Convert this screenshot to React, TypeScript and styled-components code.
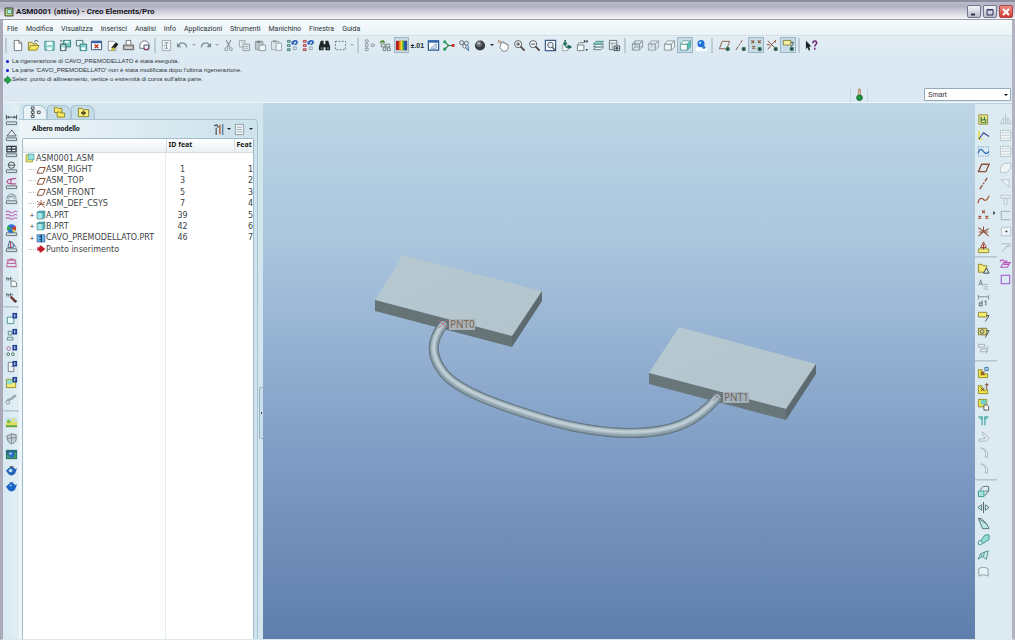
import React from "react";
import styled, { createGlobalStyle, css } from "styled-components";

const GlobalStyle = createGlobalStyle`
  * { box-sizing: border-box; }
  body { margin: 0; font-family: "Liberation Sans", Arial, sans-serif; font-size: 7px; color: #2c3438; }
  button { font: inherit; color: inherit; background: none; border: 0; padding: 0; margin: 0; }
`;

/* ---------- icon drawings on a 14 x 14 grid ---------- */

const L = ({ d, c = "#5a6a70", w = 1, f = "none" }: { d: string; c?: string; w?: number; f?: string }) => (
  <path d={d} stroke={c} strokeWidth={w} fill={f} />
);
const B = ({ d, f }: { d: string; f: string }) => <path d={d} fill={f} />;

const ruler = <><L d="M1.5 9.5h11v3h-11z" c="#5c6d76" f="#eef4f6" /><L d="M3.5 9.5v2M5.5 9.5v2M7.5 9.5v2M9.5 9.5v2M11 9.5v2" c="#9aa9b0" w={0.7} /></>;
const eye = <><circle cx="10.500" cy="10.800" r="2.400" fill="#4a7d6c" /><circle cx="10.500" cy="10.800" r="1" fill="#173c36" /></>;
const flag = <><B d="M8 1h5v6H8z" f="#1d3f94" /><L d="M10.5 2.5v3" c="#fff" /></>;
const cube = (c: string, front: string, side = front) => (
  <><L d="M1.500 5.500h7.500v6.500H1.500z" c={c} f={front} /><L d="M1.500 5.500l3-3.500h8L9 5.500z" c={c} f={front} /><L d="M9 5.500l3.500-3.500v6.500L9 12z" c={c} f={side} /></>
);
const lens = <><circle cx="5.500" cy="5.500" r="3.800" fill="#f5fafb" stroke="#4f5b60" /><L d="M8 8l4.500 4.500" c="#54433c" w={1.8} /></>;

const icons: Record<string, React.ReactNode> = {
  fresh: <><L d="M3.5 1.500h5l3 3v8h-8z" f="#fff" c="#6c7378" /><L d="M8.500 1.500v3h3" c="#6c7378" /></>,
  open: <><L d="M1.500 12V3.500h4l1 1.500h4v2" c="#8d8428" f="#efe28a" /><L d="M1.500 12l2.500-5h9l-2.500 5z" c="#8d8428" f="#f6e85e" /><L d="M8 3c1-2 3-2 4 0" c="#39434a" /></>,
  save: <><L d="M2 2.500h10v9.500H2z" c="#3d8d8c" f="#8fd8d0" /><B d="M4 3h6v3.500H4zM4.500 9h5v3h-5z" f="#f4fbfb" /></>,
  saveCopy: <><L d="M4.500 1.500h8v7h-8z" c="#2f7d7e" f="#7fcfc8" /><B d="M6.500 2h4v2h-4z" f="#fff" /><L d="M1.500 5.500h6v7h-6z" c="#3a4c54" f="#9ddbd2" /><B d="M3 9h3v3H3z" f="#fff" /><L d="M1 2h2" c="#445" /></>,
  backup: <><L d="M1.500 1.500h7v6h-7z" c="#3f6e73" f="#e8f5f5" /><L d="M5.500 5.500h7v7h-7z" c="#2f7d7e" f="#86d3cb" /><B d="M7 9h4v3H7z" f="#fff" /></>,
  close: <><L d="M1.500 2.500h11v9h-11z" c="#284b7a" f="#fff" /><B d="M2 2h10v2.500H2z" f="#2e5fa6" /><L d="M5 6l4 4M9 6l-4 4" c="#c0392b" w={1.500} /></>,
  erase: <><L d="M2.500 2.500h6l2 2v8h-8z" c="#8b9296" f="#fff" /><L d="M7 10.500l5-6" c="#222" w={3.500} /><L d="M6 12.500l3-3" c="#c8c13c" w={2.500} /></>,
  print: <><L d="M4.500 6V1.500h5V6" c="#696c6e" f="#fff" /><L d="M1.500 6.500h11v5h-11z" c="#5a5c5d" f="#b3aeb0" /><L d="M3 9.500h8" c="#f2eccc" /></>,
  mail: <><path d="M2 7a5 5 0 0 1 10 0v3H2z" fill="#fff" stroke="#5c6a75" /><L d="M6.500 6.500h5v5h-5z" c="#454f59" f="#eef" /><L d="M7 10l2 2 2-2" c="#b03" /></>,
  props: <><L d="M2.500 1.500h9v11h-9z" c="#9aa6ac" f="#eef4f7" /><L d="M5 4h4M7 4v6M5 10h4M4 7h2" c="#8b979d" /></>,
  undo: <><L d="M3 6.500C5 3 11 3.500 11.500 9" c="#7d8d95" w={1.400} /><B d="M1 4v5h5z" f="#7d8d95" /></>,
  redo: <><L d="M11 6.500C9 3 3 3.500 2.500 9" c="#7d8d95" w={1.400} /><B d="M13 4v5H8z" f="#7d8d95" /></>,
  cut: <><L d="M4.500 1l4 8M9.500 1l-4 8" c="#8b979d" w={1.300} /><circle cx="4.500" cy="11" r="1.600" fill="none" stroke="#8b979d" /><circle cx="9.500" cy="11" r="1.600" fill="none" stroke="#8b979d" /></>,
  copy: <><L d="M1.500 1.500h6v7h-6z" c="#98a5ac" f="#e9f1f5" /><L d="M5.500 5.500h7v7h-7z" c="#8b979d" f="#dfe9ee" /><L d="M3 3.500h3M7 8h4M7 10h4" c="#a2adb3" /></>,
  paste: <><L d="M1.500 2.500h8v9h-8z" c="#8b979d" f="#bac7cd" /><L d="M5.500 6.500h7v6h-7z" c="#8b979d" f="#eef4f7" /><L d="M3 3h4" c="#6f7c83" w={2} /></>,
  pasteSp: <><L d="M1.500 2.500h8v9h-8z" c="#98a5ac" f="#dce7ec" /><L d="M6.500 4.500h6v8h-6z" c="#98a5ac" f="#eef4f7" /><L d="M3 2.500h4" c="#8b979d" w={2} /></>,
  regen: <><L d="M1.500 1.500h3v2h-3zM1.500 6h3v2h-3zM1.500 10.500h3v2h-3z" c="#3b7c74" f="#b8e3da" /><L d="M7 5c1-4 5-4 5-1l-2 2" c="#2459b8" w={1.700} /><B d="M6 2v4h4z" f="#2459b8" /><L d="M8 8.500h3v3H8z" c="#8fa1ab" f="#e5f1f5" /></>,
  regenAll: <><L d="M1.500 1.500h3v2h-3zM1.500 6h3v2h-3zM1.500 10.500h3v2h-3z" c="#a83b42" f="#f3c3c1" /><L d="M7 5c1-4 5-4 5-1l-2 2" c="#2459b8" w={1.700} /><B d="M6 2v4h4z" f="#2459b8" /><L d="M8 8.500h3v3H8z" c="#8fa1ab" f="#e5f1f5" /></>,
  find: <><B d="M3 2h3v3l1 1 1-1V2h3l2 6v4H8V9H6v3H1V8z" f="#1e2628" /><B d="M3 9h1.500v2H3zM10 9h1.500v2H10z" f="#8a979c" /></>,
  select: <path d="M1.500 2.500h11v9h-11z" fill="none" stroke="#5f7077" strokeDasharray="2 1.500" />,
  tree: <L d="M2.500 1h3v2.500h-3zM2.500 5.500h3V8h-3zM2.500 10h3v2.500h-3zM9 5.500h3V8H9zM4 3.500v2M4 8v2" c="#8b979d" f="#eef4f7" />,
  treeDark: <L d="M2.500 1h3v2.500h-3zM2.500 5.500h3V8h-3zM2.500 10h3v2.500h-3zM9 5.500h3V8H9zM4 3.500v2M4 8v2" c="#39464c" f="#fff" />,
  setup: <><L d="M2.500 5.500h4v3h-4zM7.500 5.500h4v3h-4zM4.500 9.500h3v3h-3zM9 9.500h3v3H9z" c="#6b7b82" f="#e8efef" /><L d="M1 4l3-2 2 2" c="#5f8e3a" w={2} /></>,
  colors: <><B d="M1 2h12v10H1z" f="#b01d1d" /><B d="M4 2h9v10H4z" f="#ef7a1a" /><B d="M6 2h7v10H6z" f="#f3df28" /><B d="M8 2h5v10H8z" f="#33a04a" /><B d="M10 2h3v10h-3z" f="#2f4fb5" /></>,
  window: <><L d="M1.500 2h11v10h-11z" c="#2a548c" f="#fff" w={1.300} /><B d="M1 1.500h12V4H1z" f="#356bb0" /><L d="M4 10l6-5v5z" c="#7ca2ca" f="#dfeaf5" /></>,
  nodes: <><L d="M3 3l4 4h5M3 11l4-4" c="#374" w={1.200} /><B d="M1.500 1.500h3v3h-3zM1.500 9.500h3v3h-3z" f="#229a55" /><B d="M10.500 5.500h3v3h-3z" f="#c22" /></>,
  chain: <><circle cx="4" cy="4" r="2.200" fill="#dfe7ee" stroke="#55647a" /><circle cx="9" cy="4.500" r="2.200" fill="#dfe7ee" stroke="#55647a" /><circle cx="7" cy="8" r="1.800" fill="#fff" stroke="#667" /><L d="M8 9l4 4M11 7v5" c="#2c5c9c" /></>,
  zoomIn: <>{lens}<L d="M3.500 5.500h4M5.500 3.500v4" c="#333" /></>,
  zoomOut: <>{lens}<L d="M3.500 5.500h4" c="#333" /></>,
  refit: <><L d="M1.500 1.500h11v11h-11z" c="#3a5e86" f="#f8fcff" w={1.300} /><circle cx="7" cy="6.500" r="3" fill="#e2eef4" stroke="#4b565b" /><L d="M9 9l3 3" c="#4b565b" w={1.500} /></>,
  hand: <><path d="M4 7V4.500h1.500V3H7v1h1.500v1H10v1h2v4l-2 3H6L3 9z" fill="#fff" stroke="#5c6468" strokeWidth=".8" /><L d="M1 1l3 3M1 4l3-2" c="#a4643c" /></>,
  orient: <><L d="M2.500 6.500h6v6h-6z" c="#9aa9b0" f="#f4fafa" /><L d="M5.500 1v5M6 8.500h4" c="#1b6a57" w={1.600} /><B d="M3 4h5L5.500 8z" f="#1b6a57" /><B d="M9 6l4 2.500L9 11z" f="#165946" /></>,
  views: <><L d="M1.500 6.500h7v6h-7zM1.500 6.500l2-2.500h5" c="#6c8088" f="#f7fbfb" /><L d="M9 1v3M12 1v3M9 2.500h3" c="#333d42" /><B d="M10 11h3l-1.500 2z" f="#222" /></>,
  layers: <><L d="M1.500 11.500l3-3h8l-3 3z" c="#4c6e70" f="#eef8f6" w={0.9} /><L d="M1.500 8.500l3-3h8l-3 3z" c="#4c6e70" f="#eef8f6" w={0.9} /><L d="M1.500 5.500l3-3h8l-3 3z" c="#3f7f78" f="#8fdccb" w={0.9} /></>,
  manager: <><L d="M1.500 1.500h8v10h-8z" c="#5f6f76" f="#edf3f4" /><L d="M1.500 4.500h8M4.500 4.500v7" c="#8b9aa1" /><L d="M6.500 7.500h6v5h-6z" c="#3f4c52" f="#d6dfe2" /><circle cx="9.500" cy="10" r="1.500" fill="#3f4c52" /></>,
  wire: <>{cube("#8a999f", "none")}<L d="M4.500 2v6.500h8M4.500 8.500L1.500 12" c="#8a999f" /></>,
  hidden: <>{cube("#98a5ab", "none")}<path d="M4.500 3v5.500h8M4.500 8.500L1.500 12" stroke="#98a5ab" strokeDasharray="1 1" fill="none" /></>,
  noHidden: cube("#87969c", "#f0f6f8"),
  shade: cube("#5f9f9c", "#fdffff", "#4fc2b4"),
  sphere: <><circle cx="6.500" cy="7" r="5.500" fill="#3b4045" /><circle cx="5.500" cy="5.500" r="3" fill="#6f777c" /><circle cx="5" cy="4.500" r="1.400" fill="#b8bfc2" /></>,
  globe: <><B d="M1 9h12v4H1z" f="#fbfdfe" /><circle cx="6.500" cy="5" r="3.800" fill="#1e6fd6" /><circle cx="5.500" cy="4" r="1.400" fill="#9fd0fb" /><circle cx="9.500" cy="9" r="1.800" fill="#3a82c9" /></>,
  plane: <L d="M1.500 11.500l3.500-8h8l-3.500 8z" c="#8a5138" w={1.400} />,
  planeEye: <><L d="M1.500 10.500l3-8h8l-3 8z" c="#8a5a42" />{eye}</>,
  axis: <path d="M3 13L11 1" stroke="#8a5138" strokeWidth="1.400" strokeDasharray="5 1.500 2 1.500" />,
  axisEye: <><path d="M2 12L9 1" stroke="#8a5a42" strokeDasharray="5 1 2 1" />{eye}</>,
  points: <L d="M5.500 1.500l3 3M8.500 1.500l-3 3M1.500 7.500l3 3M4.500 7.500l-3 3M9 7.500l3 3M12 7.500l-3 3" c="#9a4b30" w={1.200} />,
  pointsEye: <><L d="M1.500 1.500l3 3M4.500 1.500l-3 3M8.500 1.500l3 3M11.500 1.500l-3 3M2.500 7.500l3 3M5.500 7.500l-3 3" c="#8a5a32" w={1.200} />{eye}</>,
  csys: <><L d="M7 7V1.500M7 7L1.500 12M7 7l5.500 5M1.500 3L7 7l5.500-3M2 7.500h10" c="#8f4f36" w={1.100} /></>,
  csysEye: <><L d="M2 2l4 4 4-4M6 6L2 11M6 6l4 4M1 6h3M10 1v3" c="#8f4f36" />{eye}</>,
  annotEye: <><L d="M1.500 1.500h8v5h-8z" c="#87833c" f="#f5f0a0" /><L d="M9.500 3.500h3l-3 6" c="#4c5458" />{eye}</>,
  help: <><B d="M1 2l6 6H4.500l1 4-1.500.5-1.200-3.500L1 11z" f="#1b2023" /><L d="M8.500 4.500c0-3 4-3 4 0 0 1.500-2 1.500-2 3.500M10.500 9.500v2" c="#6b2475" w={1.600} /></>,
  /* analysis column */
  mDist: <>{ruler}<L d="M1.500 2v5M12.500 2v5M1.500 4.500h11M4.500 3L3 4.500 4.500 6M9.500 3L11 4.500 9.500 6" c="#3c474c" /></>,
  mAngle: <>{ruler}<L d="M2 7.500h10L7.500 1z" c="#4f5b60" f="#e3ecef" /></>,
  mArea: <>{ruler}<L d="M2 1.500h10v6H2zM7 1.500v6M2 4.500h10" c="#2e383c" w={1.300} /></>,
  mDiam: <>{ruler}<circle cx="7" cy="4.500" r="3.400" fill="#e3ecef" stroke="#3c474c" /><L d="M3 4.500h8" c="#3c474c" /></>,
  mCurve: <>{ruler}<L d="M12 1.500C5 2 2 3 2 5s4 2.500 10 2.500M7 2l-1 5" c="#b0528f" w={1.300} /></>,
  mDraft: <>{ruler}<path d="M2 8C2 0 12 0 12 8M4 8c0-4 6-4 6 0M2 5l9-1" fill="none" stroke="#7d8f98" /></>,
  mWave: <L d="M1 4.500c3-4 5 3 8 0 2-2 3-1 4 0M1 8c3-4 5 3 8 0 2-2 3-1 4 0M1 11.500c3-4 5 3 8 0 2-2 3-1 4 0" c="#bf6fb9" w={1.200} />,
  mRainbow: <>{ruler}<circle cx="7" cy="5" r="4.800" fill="#2f6fd2" /><B d="M7 5L3 2a5 5 0 0 0-.5 5z" f="#36b24c" /><B d="M7 5l4-3a5 5 0 0 1 .5 5z" f="#d3342f" /><B d="M7 5l4.500 2-2 2.500z" f="#f2d52e" /></>,
  mSection: <>{ruler}<L d="M3 8L5 1l4 2.500V8z" c="#4a6086" f="#c9d9ea" /><L d="M9 4l3 4" c="#4a6086" /><L d="M6 2v7" c="#b93b3b" /></>,
  mShape: <><path d="M2 12C1 0 13 0 12 12M2 4.500h10M2 8h10M2 11.500h10" fill="none" stroke="#c06a9f" strokeWidth="1.200" /></>,
  mPage: <><L d="M1 4h7M2 2v4M4 3v3M6 2v4" c="#66757c" /><L d="M6.500 6.500h4l2 2v4h-6z" c="#6d7c83" f="#f6fafb" /></>,
  mProbe: <><L d="M1 4h8M2 2v4M4 3v3M6 2v4" c="#66757c" /><L d="M6 6l6 6" c="#7a3434" w={2.500} /><L d="M9 11h4" c="#333" /></>,
  fPart: <><L d="M2.500 5.500h7v7h-7z" c="#4e8f8f" f="#eafafa" />{flag}</>,
  fAsm: <><L d="M3.500 3.500h4v4h-4zM2.500 10h6v3h-6z" c="#66868c" f="#cdeeea" />{flag}</>,
  fMulti: <><circle cx="4" cy="5" r="2" fill="none" stroke="#b16aa1" /><circle cx="3.500" cy="11" r="1.500" fill="none" stroke="#475" /><circle cx="8.500" cy="11" r="1.500" fill="none" stroke="#475" />{flag}</>,
  fDoor: <><L d="M3.500 2.500h6v10h-6zM6 7h2" c="#718087" f="#eef4f5" />{flag}</>,
  fYellow: <><L d="M1.500 3.500h10v9h-10z" c="#8d8a2d" f="#f5ed6b" /><B d="M2 4h6v5H2z" f="#8fdccb" />{flag}</>,
  fPipe: <><path d="M3 12V9c0-2 5 0 6-4l3-1" fill="none" stroke="#9aa7ad" strokeWidth="2.500" /><circle cx="3" cy="11" r="2" fill="#dbe5ea" stroke="#8a989f" /></>,
  landscape: <><B d="M1 2h12v10H1z" f="#bfe3ec" /><B d="M1 7l4-2 4 2 4-1v6H1z" f="#e2de5a" /><B d="M1 10h12v2H1z" f="#55a64c" /><circle cx="9" cy="4" r="1.500" fill="#f2e14c" /><circle cx="4" cy="6" r="2" fill="#7cba4e" /></>,
  shield: <><L d="M2 4l5-2 5 1v5c0 3-3 4-5 5-3-1-5-4-5-9z" c="#74838a" f="#c4cfd4" /><L d="M7 2v10M2 7l10-1" c="#7f8d94" /></>,
  photo: <><B d="M1 2h12v10H1z" f="#2a6d78" /><B d="M2 8l3-4 3 3 4-3v7H2z" f="#41a15c" /><circle cx="7" cy="7" r="3.200" fill="#2a68cc" /><circle cx="6" cy="6" r="1.200" fill="#cfe6ff" /></>,
  teapot: <><path d="M3 5.500c2-3 6-3 8 0l2-1-2 5.500c-2 3-6 3-8 0L1 7z" fill="#2563b8" /><circle cx="6" cy="7" r="2" fill="#b8dcf8" /><L d="M5 3h4" c="#333" /></>,
  teapotBlue: <><path d="M3 5.500c2-3 6-3 8 0l2-1-2 5.500c-2 3-6 3-8 0L1 7z" fill="#1d64c8" /><circle cx="6" cy="6" r="1" fill="#9fd0fb" /><L d="M5 3h4" c="#1a4f9c" /></>,
  /* feature columns */
  style: <><L d="M2 2h9.500v10H2z" c="#8e8e3a" f="#f0ea82" /><L d="M4.500 4v6M8 4v3M4.500 7.500h5v3h-5" c="#3c7c50" w={1.300} /></>,
  sketch: <><L d="M2 2v9h4" c="#e6df58" w={1.800} /><L d="M2 11l5-7 6 4" c="#33469a" w={1.200} /></>,
  curveBox: <><path d="M1 2h12M1 12h12M1.500 2v10M12.500 2v10" stroke="#7fb0d6" strokeDasharray="1.500 1" fill="none" /><L d="M1 9c3-8 5-3 7-1s3 1 5-1" c="#2a73c0" w={1.400} /></>,
  curve: <L d="M1 11c1-6 4-6 6-4s4 1 6-4" c="#a35a3c" w={1.300} />,
  refPt: <><L d="M1.500 8.500h11v4h-11z" c="#958f35" f="#f3ec80" /><L d="M7 1L4 7h6zM7 3v6" c="#a03a2a" /></>,
  folderGo: <><L d="M1.500 11V2.500h4l1 1.500h4V11z" c="#8d8428" f="#f2e978" /><L d="M7 12l3-5.500L13 12z" c="#3a4347" f="#dfe8ea" /></>,
  textA: <><L d="M2 8L4 2l2 6M2.500 6.500h3" c="#76858c" /><L d="M7 7h5M7 9.500h5M7 12h5" c="#a8b5bb" /></>,
  dim: <><L d="M1.500 1v5M12.500 1v5M1.500 3h11" c="#7d8b92" /><L d="M5.500 7v5.500h-3v-3h3M9.500 12.500V7.500L8 8.500" c="#6d7b82" w={1.200} /></>,
  note: <><L d="M1.500 2.500h9v5h-9z" c="#8a873a" f="#f4ee6c" /><L d="M10 6h3l-4 6.500" c="#444d51" /></>,
  noteSym: <><L d="M1.500 2.500h9v7h-9z" c="#77752f" f="#dfdc84" /><circle cx="5.500" cy="6" r="2" fill="none" stroke="#555" /><L d="M10 5h3l-4 7.500" c="#444d51" /></>,
  noteGrey: <L d="M1.500 2.500h7v3h-7zM4 7.500h7v3H4zM12 4l-2 8.500" c="#a2afb5" f="#e6eef2" />,
  asmAdd: <><L d="M1.500 4v8.500h10v-4h-6V4z" c="#8f8a2a" f="#f3e848" /><L d="M4 6l4 4M8 6l-4 4" c="#8a4a20" w={1.300} /><L d="M8.500 1.500h3.500v3.500H8.500z" c="#3a76a6" f="#a9d7ef" /></>,
  asmMake: <><L d="M1.500 4v8.500h10v-4h-6V4z" c="#8f8a2a" f="#f3e848" /><L d="M4 6l4 4M8 6l-4 4M10.500 1v7M8.500 3h4" c="#7a4a30" /></>,
  asmPart: <><L d="M1.500 1.500h9v8h-9z" c="#8f8a2a" f="#f3e848" /><B d="M4 2h6v5H4z" f="#72cfc8" /><L d="M7.500 7.500h3l2 2v3.500h-5z" c="#555" f="#fff" /></>,
  pipe: <L d="M1.500 3h4v2h-2.500M12.500 3h-4v2H11M5.500 4v8M8.500 4v8" c="#45aaa4" w={1.300} />,
  greyFold: <L d="M2 12h8l3-3-7-7v3l3 4-7 1z" c="#aab6bc" f="#e2ebef" />,
  greyArc: <L d="M4 2c4 1 6 5 5 10h2c2-4-1-9-7-10z" c="#aab6bc" f="#e2ebef" />,
  extrude: <><L d="M6.500 1.500h6v5h-4M3 6l3.500-4.500M8 12l4.500-5.500" c="#557177" /><L d="M1.500 6.500h6v6h-6z" c="#3a9690" f="#a6e6de" /></>,
  revolve: <><L d="M7 1v12" c="#4d5f66" /><L d="M5 4L1 7l4 3zM9 4l4 3-4 3z" c="#54757a" f="#c8ebe7" /></>,
  sweep: <><L d="M1.500 1.500l9 6 2.500 5H6z" c="#547075" f="#b8e6e0" /><L d="M1.500 1.500h3l6 6" c="#547075" /></>,
  blend: <><L d="M3 9L9 2h4v5l-6 4z" c="#44888a" f="#90ddd3" /><circle cx="3.500" cy="10.500" r="2.200" fill="#d8f5f1" stroke="#44888a" /></>,
  surface: <><L d="M1 11l3-6 8-3-2 9-4-3z" c="#4b8d8c" f="#c8efe9" /><L d="M4 5l2 4M8 3l-1 5" c="#4b8d8c" /></>,
  patch: <L d="M2 12V4c3-2 6-2 10 0v8c-3-2-7-2-10 0z" c="#84a0a4" f="#e7f4f5" />,
  mirror: <L d="M1 11.500h4V5zM13 11.500H9V5zM7 1v12" c="#b7c4ca" />,
  grid: <><L d="M1.500 1.500h11v11h-11z" c="#b4c1c7" f="#f0f5f8" /><path d="M3 4h9M3 7h9M3 10h9" stroke="#b4c1c7" strokeDasharray="2 1" /></>,
  merge: <L d="M5.500 2.500h7v5l-4 5h-7v-5z" c="#b7c4ca" f="#edf3f6" />,
  corner: <L d="M2 3h9v8z" c="#b7c4ca" f="#edf3f6" />,
  tee: <L d="M2 2.500h10v3H2zM5.500 5.500h3v7h-3z" c="#b7c4ca" f="#edf3f6" />,
  bracket: <L d="M12 2.500H2.500v9H12" c="#b0bdc3" w={1.400} />,
  square: <><L d="M2.500 2.500h10v9h-10z" c="#b7c4ca" f="#edf3f6" /><L d="M7 7h2" c="#333" w={1.500} /></>,
  trim: <L d="M2 3h10v3H7M3 12l8-9" c="#b0bdc3" />,
  waves: <L d="M1 5c3-5 5 2 8-1M2 11l3-5h7l-3 5zM5 8h6" c="#b956bd" w={1.200} />,
  violet: <L d="M2.500 2.500h9v9h-9z" c="#a971d6" w={1.400} />,
  flyout: <B d="M1 0l7 7-7 7z" f="#1f282c" />,
  /* panel */
  part: <><L d="M1.500 3.500h8.500v9H1.500z" c="#3f8e96" f="#a5e6ea" /><L d="M1.500 3.500l2-2h9l-2.500 2zM10 12.500l2.500-2v-9L10 3.500z" c="#3f8e96" f="#62bfc6" /></>,
  partBlue: <><L d="M1.500 2.500h11v10h-11z" c="#2c5f97" f="#6fb7e6" /><L d="M7.500 2v11M4.500 5h4M4.500 9.500h4" c="#153f72" w={1.600} /></>,
  asm: <><L d="M1.500 2.500h9v10h-9z" c="#98902c" f="#f4ec6a" /><L d="M4.500 1.500h8v8h-8z" c="#3f9a9c" f="#97e2df" /></>,
  insert: <B d="M5 2h2l6 5-6 5H5V9.500H2v-5h3z" f="#c11b2a" />,
  folders: <><L d="M1.500 7V1.500h3l1 1h4V7z" c="#8d8428" f="#f6e85e" /><L d="M4.500 12V6.500h3l1 1h4V12z" c="#8d8428" f="#f6e85e" /></>,
  folderStar: <><L d="M1.500 11.500V2.500h4l1 1.500h6v7.500z" c="#8d8428" f="#f8ef80" /><B d="M6 5h2v1.500h1.500v2H8V10H6V8.500H4.500v-2H6z" f="#5b531c" /></>,
  tools: <><L d="M2 3l3-1 2 3M4.500 5v8" c="#4f5d64" w={1.400} /><L d="M8.500 2v10" c="#b5683e" w={1.600} /><L d="M11.500 1v5M11.500 6v7" c="#5c86a6" w={1.600} /></>,
  list: <><L d="M2.500 1.500h9v11h-9z" c="#8b9aa1" f="#f4f8fa" /><L d="M4 4.500h6M4 7h6M4 9.500h6" c="#9aa8ae" /></>,
  light: <><circle cx="7" cy="2.500" r="1.500" fill="#e6b8a4" stroke="#a66d58" strokeWidth=".8" /><circle cx="7" cy="6" r="1.500" fill="#eccfb4" stroke="#a66d58" strokeWidth=".8" /><circle cx="7" cy="10.500" r="3" fill="#1d9a3a" stroke="#11602a" /></>,
  app: <><L d="M1.500 1.500h11v11h-11z" c="#2b3f35" f="#d9e87a" w={1.400} /><L d="M4.500 3.500h6v6h-6z" c="#2f7566" f="#b3ece0" /></>,
  go: <path d="M1 4.500h4V1h2l6 6-6 6H5V9.500H1z" fill="#21a34b" stroke="#12602c" />,
};

const Svg = styled.svg<{ $s: number }>`
  width: ${p => p.$s}px;
  height: ${p => p.$s}px;
  flex: none;
  display: block;
`;
const Icon = ({ name, size = 13 }: { name: string; size?: number }) => (
  <Svg $s={size} viewBox="0 0 14 14" aria-hidden="true">{icons[name]}</Svg>
);

/* ---------- window frame ---------- */

const Frame = styled.div`
  min-height: 100vh;
  display: flex;
  flex-direction: column;
  background: #dbe9f2;
  border-left: 3px solid #aaa9b8;
  border-right: 3px solid #b3b2c0;
  border-bottom: 1px solid #dce6ee;
`;
const TitleBar = styled.header`
  height: 20px;
  flex: none;
  margin: 0 -3px;
  padding: 2px 2px 0 4px;
  display: flex;
  align-items: center;
  gap: 2px;
  border-top: 2px solid #8e8d9f;
  border-bottom: 1px solid #9f9eb0;
  background: linear-gradient(#bdbccd, #b1b0c3 25%, #d8d8e2 65%, #f3f3f7);
`;
const Title = styled.h1`
  flex: 1;
  margin: 0;
  font: bold 8px Roboto, Arial, sans-serif;
  color: #15151c;
`;
const WinButton = styled.button<{ $danger?: boolean }>`
  width: 14px;
  height: 13px;
  display: grid;
  place-items: center;
  border: 1px solid #74748c;
  border-radius: 2px;
  background: linear-gradient(#f4f4f9, #b9b9cc);
  ${p => p.$danger && css`
    border-color: #a54a48;
    background: linear-gradient(#ee8d83, #cf3d35);
  `}
`;
const MenuBar = styled.nav`
  height: 16px;
  flex: none;
  padding: 2px 0 0 4px;
  display: flex;
  align-items: center;
  gap: 8px;
  background: linear-gradient(#f7fbfc, #e9f3f7);
  border-bottom: 1px solid #d3e0e8;
`;
const MenuItem = styled.button`
  font-family: Roboto, Arial, sans-serif;
  line-height: 12px;
`;
const ToolBar = styled.div`
  height: 19px;
  flex: none;
  display: flex;
  align-items: center;
  padding-bottom: 1px;
  background: linear-gradient(#e3eef4, #dbe9f2);
`;
const Group = styled.div<{ $size: number; $column?: boolean }>`
  display: flex;
  flex: none;
  align-items: center;
  ${p => p.$column
    ? css`flex-direction: column; height: ${p.$size}px;`
    : css`width: ${p.$size}px;`}
`;
const Divider = styled.span<{ $row?: boolean; $wide?: boolean }>`
  flex: none;
  ${p => p.$row
    ? css`
      align-self: flex-start;
      width: ${p.$wide ? 22 : 16}px;
      height: 2px;
      margin: 1px 0 2px;
      border-top: 1px solid #b4c6d1;
      border-bottom: 1px solid #c6d5de;
    `
    : css`width: 2px; height: 15px; margin: 0 3px 0 2px; background: #bccbd5;`}
`;
const ToolButton = styled.button<{ $on?: boolean }>`
  flex: 0 1 16px;
  min-width: 0;
  min-height: 0;
  height: 16px;
  display: flex;
  align-items: center;
  justify-content: center;
  ${p => p.$on && css`
    background: #c6dce9;
    outline: 1px solid #9db5c5;
    outline-offset: -1px;
  `}
`;
const RowButton = styled(ToolButton)`
  width: 16px;
`;
const Arrow = styled.button<{ $dim?: boolean }>`
  flex: 0 1 7px;
  display: flex;
  justify-content: center;
  &::before {
    content: "";
    border: 2px solid transparent;
    border-top-color: ${p => (p.$dim ? "#9fb0b9" : "#1f282c")};
    border-bottom: 0;
  }
`;
const Precision = styled.span`
  font-weight: bold;
  color: #1f282c;
`;

const Status = styled.section`
  height: 48px;
  flex: none;
  display: flex;
  justify-content: space-between;
  background: #dce9f2;
  border-bottom: 1px solid #eef5f8;
`;
const Messages = styled.ul`
  margin: 0;
  padding: 2px 0 0 1px;
  list-style: none;
  font-size: 6px;
`;
const Message = styled.li`
  height: 9px;
  display: flex;
  align-items: center;
  line-height: 9px;
  white-space: nowrap;
`;
const Bullet = styled.span`
  width: 3px;
  height: 3px;
  margin: 0 3px 0 2px;
  border-radius: 2px;
  background: #1414d8;
`;
const Filter = styled.div`
  align-self: flex-end;
  display: flex;
  align-items: center;
`;
const LightBox = styled.div`
  width: 18px;
  height: 15px;
  margin-right: 56px;
  display: grid;
  place-items: center;
  border: solid #c7d7e1;
  border-width: 0 1px;
`;
const FilterSelect = styled.select`
  appearance: none;
  width: 87px;
  height: 13px;
  margin: 0 1px 1px 0;
  padding: 0 3px;
  font: 7px "Liberation Sans", Arial, sans-serif;
  color: #2c3438;
  border: 1px solid #93aab8;
  border-radius: 1px;
  background: #fff;
`;
const SelectWrap = styled.label`
  display: grid;
  align-items: center;
  > * { grid-area: 1 / 1; }
`;
const SelectArrow = styled.span`
  justify-self: end;
  margin-right: 4px;
  border: 2px solid transparent;
  border-top-color: #111;
  border-bottom: 0;
  pointer-events: none;
`;

/* ---------- body ---------- */

const Body = styled.div`
  flex: 1;
  display: flex;
`;
const LeftBar = styled.aside`
  width: 16px;
  flex: none;
  padding-top: 9px;
  display: flex;
  flex-direction: column;
  align-items: center;
  background: linear-gradient(90deg, #d8e9f2, #e2eef4);
`;
const Gap = styled.span`
  flex: none;
  height: 3px;
`;
const Panel = styled.aside`
  width: 244px;
  flex: none;
  padding-top: 2px;
  display: flex;
  flex-direction: column;
  background: #d3e6ee;
`;
const Tabs = styled.div`
  height: 14px;
  padding-left: 4px;
  display: flex;
  align-items: flex-end;
`;
const Tab = styled.button<{ $active?: boolean }>`
  width: 24px;
  height: 14px;
  display: flex;
  align-items: center;
  justify-content: center;
  border: 1px solid #a9c3d0;
  border-bottom: 0;
  border-radius: 4px 8px 0 0;
  background: ${p => (p.$active ? "#eaf4f8" : "#c3dce8")};
`;
const PanelBody = styled.div`
  flex: 1;
  margin-right: 5px;
  padding: 0 3px;
  display: flex;
  flex-direction: column;
  border: solid #a9c3d0;
  border-width: 1px 1px 0 0;
  border-radius: 0 4px 0 0;
  background: linear-gradient(90deg, #edf5f8, #cfe3ed 90%);
`;
const PanelHead = styled.div`
  height: 18px;
  padding-left: 10px;
  display: flex;
  align-items: center;
`;
const PanelTitle = styled.h2`
  flex: 1;
  margin: 0;
  font: bold 7px Roboto, Arial, sans-serif;
  color: #101517;
`;
const TreeBox = styled.div`
  flex: 1;
  overflow: hidden;
  border: 1px solid #9dbccc;
  border-bottom: 0;
  border-radius: 2px 2px 0 0;
  background: linear-gradient(90deg, transparent 142px, #e8edf0 142px, #e8edf0 143px, transparent 143px) #fff;
`;
const Table = styled.table`
  width: 251px;
  height: 116px;
  table-layout: fixed;
  border-collapse: collapse;
  font: 8px "DejaVu Sans", Verdana, sans-serif;
  color: #3c4346;
  th {
    height: 13px;
    padding: 0 0 0 2px;
    text-align: left;
    font: bold 7px "Noto Sans", Verdana, sans-serif;
    line-height: 12px;
    color: #16191b;
    background: linear-gradient(#ffffff, #e9f0f3);
    border-right: 1px solid #d3dde2;
    border-bottom: 1px solid #d3dde2;
  }
  td { padding: 0; line-height: 11px; height: 11px; }
`;
const NameCol = styled.col`
  width: 143px;
`;
const IdCol = styled.col`
  width: 68px;
`;
const NodeCell = styled.div<{ $root?: boolean }>`
  display: flex;
  align-items: center;
  height: 11px;
  gap: ${p => (p.$root ? 1 : 0)}px;
  padding-left: ${p => (p.$root ? 2 : 5)}px;
  white-space: nowrap;
`;
const Branch = styled.span`
  width: 8px;
  height: 1px;
  border-top: 1px dotted #c0c8cc;
`;
const Toggle = styled.button`
  width: 8px;
  height: 7px;
  display: grid;
  place-items: center;
  font-size: 6px;
  line-height: 6px;
`;
const Num = styled.span`
  display: block;
  width: 33px;
  text-align: center;
`;
const Sash = styled.button`
  align-self: flex-start;
  width: 4px;
  height: 52px;
  margin: 284px 0 0 -4px;
  display: grid;
  place-items: center;
  border: 1px solid #9ab5c4;
  border-right: 0;
  border-radius: 2px 0 0 2px;
  background: #c9e0ea;
  z-index: 1;
  flex: none;
  &::after { content: ""; width: 1px; height: 2px; background: #33444c; }
`;
const Viewport = styled.main`
  flex: 1;
  min-width: 0;
  display: flex;
  background: linear-gradient(#bed6e5 0, #a9c6de 26%, #93afd1 47%, #7e9cc4 66%, #5f7eab 100%);
  svg { width: 100%; height: 100%; display: block; }
`;
const RightBar = styled.aside`
  width: 37px;
  flex: none;
  padding-top: 7px;
  display: flex;
  border-top: 1px solid #b9cfdb;
  background: #dceaf2;
`;
const Column = styled.div<{ $w: number }>`
  width: ${p => p.$w}px;
  flex: none;
  display: flex;
  flex-direction: column;
  align-items: center;
`;
const Flyout = styled.button`
  margin-top: 100px;
`;

const Tools = ({ names, on = [] }: { names: string[]; on?: string[] }) => (
  <>
    {names.map((n, i) =>
      n === "|>" ? <Arrow key={i} aria-label="Altro" /> :
      n === "|>dim" ? <Arrow key={i} $dim aria-label="Altro" /> :
      n === "precision" ? <ToolButton key={i}><Precision>±.01</Precision></ToolButton> :
      <ToolButton key={i} $on={on.includes(n)} aria-label={n}><Icon name={n} /></ToolButton>
    )}
  </>
);
const Stack = ({ names, size }: { names: string[]; size: number }) => (
  <Group $column $size={size}>
    {names.map((n, i) => <RowButton key={i} aria-label={n}><Icon name={n} /></RowButton>)}
  </Group>
);

const menus = ["File", "Modifica", "Visualizza", "Inserisci", "Analisi", "Info", "Applicazioni", "Strumenti", "Manichino", "Finestra", "Guida"];

const rows: { icon: string; text: string; id?: number; feat?: number; toggle?: boolean }[] = [
  { icon: "plane", text: "ASM_RIGHT", id: 1, feat: 1 },
  { icon: "plane", text: "ASM_TOP", id: 3, feat: 2 },
  { icon: "plane", text: "ASM_FRONT", id: 5, feat: 3 },
  { icon: "csys", text: "ASM_DEF_CSYS", id: 7, feat: 4 },
  { icon: "part", text: "A.PRT", id: 39, feat: 5, toggle: true },
  { icon: "part", text: "B.PRT", id: 42, feat: 6, toggle: true },
  { icon: "partBlue", text: "CAVO_PREMODELLATO.PRT", id: 46, feat: 7, toggle: true },
  { icon: "insert", text: "Punto inserimento" },
];

const cable = "M443 325C430 342 431 356 443 372C456 389 490 403 547 420C575 428 605 433 630 433C675 433 697 421 717 398";
const shades: [number, string, number][] = [
  [10, "#5a6b74", 0], [9, "#758892", 0], [7, "#8fa2ad", 0], [5, "#a6b8c2", -1], [3, "#b9c8d0", -1], [1, "#c8d4da", -1],
];

const Scene = () => (
  <svg viewBox="263 103 712 536" role="img" aria-label="Modello">
    <defs>
      <linearGradient id="top" x1="0" y1="0" x2="1" y2="1">
        <stop offset="0" stopColor="#b6c8d0" />
        <stop offset="1" stopColor="#b3c4cc" />
      </linearGradient>
    </defs>
    <path d="M375 300L403 255L542 291L512 336z" fill="url(#top)" />
    <path d="M375 300L512 336V347L375 311z" fill="#667377" />
    <path d="M512 336L542 291V301L512 347z" fill="#5d6b70" />
    <path d="M649 373L679 327L816 364L786 409z" fill="url(#top)" />
    <path d="M649 373L786 409V420L649 384z" fill="#697679" />
    <path d="M786 409L816 364V374L786 420z" fill="#5d6b70" />
    {shades.map(([w, c, dy]) => (
      <path key={w} d={cable} transform={`translate(0 ${dy})`} fill="none" stroke={c} strokeWidth={w} strokeLinecap="round" />
    ))}
    <path d="M439 320l8 8M447 320l-8 8" stroke="#b5767f" />
    <path d="M713 393l8 8M721 393l-8 8" stroke="#8d8585" />
    <path d="M449 319h26v11h-26z" fill="#a9b3b9" />
    <path d="M723 392h26v11h-26z" fill="#a3b0bb" />
    <text x="450" y="328" fontFamily="Open Sans, sans-serif" fontSize="10" fill="#7a6048">PNT0</text>
    <text x="724" y="401" fontFamily="Open Sans, sans-serif" fontSize="10" fill="#6f6259">PNT1</text>
  </svg>
);

export default function App() {
  return (
    <Frame>
      <GlobalStyle />
      <TitleBar>
        <Icon name="app" size={10} />
        <Title>ASM0001 (attivo) - Creo Elements/Pro</Title>
        <WinButton aria-label="Riduci"><Svg $s={8} viewBox="0 0 8 8"><L d="M1 6.500h4" c="#33334a" w={2} /></Svg></WinButton>
        <WinButton aria-label="Ingrandisci"><Svg $s={8} viewBox="0 0 8 8"><L d="M1 1.500h6v5.500H1zM1 2h6" c="#33335a" /></Svg></WinButton>
        <WinButton $danger aria-label="Chiudi"><Svg $s={8} viewBox="0 0 8 8"><L d="M1 1l6 6M7 1L1 7" c="#fff" w={2} /></Svg></WinButton>
      </TitleBar>
      <MenuBar>
        {menus.map(m => <MenuItem key={m}>{m}</MenuItem>)}
      </MenuBar>
      <ToolBar>
        <Divider />
        <Group $size={142}>
          <Tools names={["fresh", "open", "save", "saveCopy", "backup", "close", "erase", "print", "mail"]} />
        </Group>
        <Divider />
        <Group $size={196}>
          <Tools names={["props", "undo", "|>dim", "redo", "|>dim", "cut", "copy", "paste", "pasteSp", "regen", "regenAll", "find", "select", "|>dim"]} />
        </Group>
        <Divider />
        <Group $size={260}>
          <Tools on={["colors"]} names={["tree", "setup", "colors", "precision", "window", "nodes", "chain", "sphere", "|>", "hand", "zoomIn", "zoomOut", "refit", "orient", "views", "layers", "manager"]} />
        </Group>
        <Divider />
        <Group $size={80}>
          <Tools on={["shade"]} names={["wire", "hidden", "noHidden", "shade", "globe"]} />
        </Group>
        <Divider />
        <Group $size={80}>
          <Tools on={["pointsEye", "annotEye"]} names={["planeEye", "axisEye", "pointsEye", "csysEye", "annotEye"]} />
        </Group>
        <Divider />
        <Group $size={16}>
          <Tools names={["help"]} />
        </Group>
      </ToolBar>
      <Status>
        <Messages>
          <Message><Bullet />La rigenerazione di CAVO_PREMODELLATO è stata eseguita.</Message>
          <Message><Bullet />La parte 'CAVO_PREMODELLATO' non è stata modificata dopo l'ultima rigenerazione.</Message>
          <Message><Icon name="go" size={8} />Selez. punto di allineamento, vertice o estremità di curva sull'altra parte.</Message>
        </Messages>
        <Filter>
          <LightBox><Icon name="light" /></LightBox>
          <SelectWrap>
            <FilterSelect aria-label="Filtro" defaultValue="Smart"><option>Smart</option></FilterSelect>
            <SelectArrow />
          </SelectWrap>
        </Filter>
      </Status>
      <Body>
        <LeftBar>
          <Stack size={158} names={["mDist", "mAngle", "mArea", "mDiam", "mCurve", "mDraft", "mWave", "mRainbow", "mSection", "mShape"]} />
          <Gap />
          <Stack size={32} names={["mPage", "mProbe"]} />
          <Divider $row />
          <Stack size={99} names={["fPart", "fAsm", "fMulti", "fDoor", "fYellow", "fPipe"]} />
          <Divider $row />
          <Stack size={80} names={["landscape", "shield", "photo", "teapot", "teapotBlue"]} />
        </LeftBar>
        <Panel>
          <Tabs>
            <Tab $active aria-label="Albero modello"><Icon name="treeDark" /></Tab>
            <Tab aria-label="Cartelle"><Icon name="folders" /></Tab>
            <Tab aria-label="Preferiti"><Icon name="folderStar" /></Tab>
          </Tabs>
          <PanelBody>
            <PanelHead>
              <PanelTitle>Albero modello</PanelTitle>
              <Group $size={43}>
                <Tools names={["tools", "|>", "list", "|>"]} />
              </Group>
            </PanelHead>
            <TreeBox>
              <Table>
                <colgroup><NameCol /><IdCol /><col /></colgroup>
                <thead>
                  <tr><th aria-label="Nome" /><th>ID feat</th><th>Feat</th></tr>
                </thead>
                <tbody>
                  <tr>
                    <td><NodeCell $root><Icon name="asm" size={10} />ASM0001.ASM</NodeCell></td><td /><td />
                  </tr>
                  {rows.map(r => (
                    <tr key={r.text}>
                      <td>
                        <NodeCell>
                          {r.toggle ? <Toggle aria-label="Espandi">+</Toggle> : <Branch />}
                          <Icon name={r.icon} size={10} />
                          {r.text}
                        </NodeCell>
                      </td>
                      <td><Num>{r.id}</Num></td>
                      <td><Num>{r.feat}</Num></td>
                    </tr>
                  ))}
                </tbody>
              </Table>
            </TreeBox>
          </PanelBody>
        </Panel>
        <Sash aria-label="Comprimi pannello" />
        <Viewport><Scene /></Viewport>
        <RightBar>
          <Column $w={16}>
            <Stack size={144} names={["style", "sketch", "curveBox", "plane", "axis", "curve", "points", "csys", "refPt"]} />
            <Divider $row $wide />
            <Stack size={99} names={["folderGo", "textA", "dim", "note", "noteSym", "noteGrey"]} />
            <Divider $row $wide />
            <Stack size={114} names={["asmAdd", "asmMake", "asmPart", "pipe", "greyFold", "greyArc", "greyArc"]} />
            <Divider $row $wide />
            <Stack size={96} names={["extrude", "revolve", "sweep", "blend", "surface", "patch"]} />
          </Column>
          <Column $w={7}>
            <Flyout aria-label="Altri punti"><Icon name="flyout" size={4} /></Flyout>
          </Column>
          <Column $w={14}>
            <Stack size={176} names={["mirror", "grid", "grid", "merge", "corner", "tee", "bracket", "square", "trim", "waves", "violet"]} />
          </Column>
        </RightBar>
      </Body>
    </Frame>
  );
}
